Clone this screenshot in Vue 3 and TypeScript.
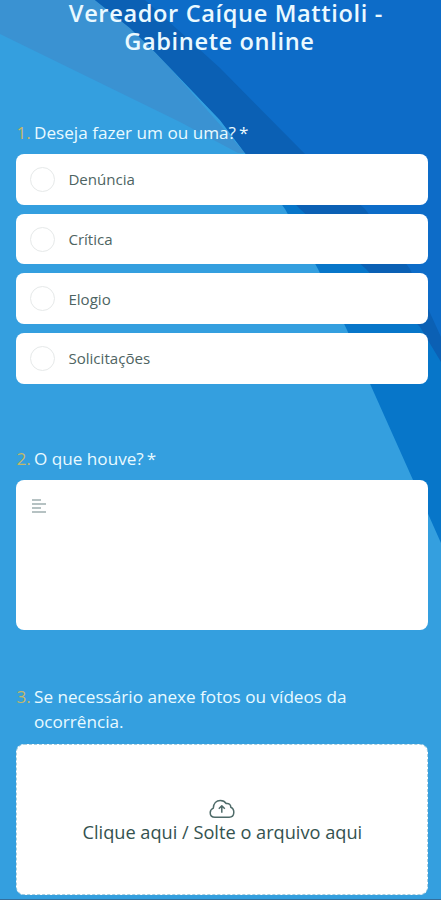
<script setup lang="ts">
interface Question {
  id: number
  text: string
  required: boolean
  kind: 'choice' | 'text' | 'upload'
}

const questions: Question[] = [
  { id: 1, text: 'Deseja fazer um ou uma?', required: true, kind: 'choice' },
  { id: 2, text: 'O que houve?', required: true, kind: 'text' },
  { id: 3, text: 'Se necessário anexe fotos ou vídeos da ocorrência.', required: false, kind: 'upload' },
]
const options: string[] = ['Denúncia', 'Crítica', 'Elogio', 'Solicitações']
</script>

<template>
  <main class="page">
    <svg class="backdrop" viewBox="0 0 441 900" aria-hidden="true">
      <rect width="441" height="900" fill="#349fdf" />
      <path d="M0 0H110L245 153H238L180 122L0 34Z" fill="#3a92d2" />
      <path d="M95 0H441V543L413 480L371 386L347 330L318 269L285 209L245 153L220 120L155 52L130 28Z" fill="#0776c9" />
      <path d="M95 0H441V362L420 327L366 269L300 209L245 153L220 120L155 52L130 28Z" fill="#0b60b4" />
      <path d="M145 0H441V337L410 269L365 209L304 153L220 68Z" fill="#0d6cc8" />
    </svg>
    <form class="form" @submit.prevent>
      <h1 class="title">
        <span class="line first">Vereador Caíque Mattioli -</span>
        <span class="line second">Gabinete online</span>
      </h1>
      <section v-for="q in questions" :key="q.id" class="question" :class="q.kind">
        <h2 class="label">
          <span class="number">{{ q.id }}.</span>
          <span class="prompt">{{ q.text }}<span v-if="q.required" class="star">*</span></span>
        </h2>
        <div v-if="q.kind === 'choice'" class="options">
          <div v-for="option in options" :key="option" class="option" role="radio" aria-checked="false">
            <span class="ring"></span>
            <span class="name">{{ option }}</span>
          </div>
        </div>
        <div v-else-if="q.kind === 'text'" class="answer">
          <svg class="lines" viewBox="0 0 14 14">
            <path d="M0 1H9M0 5H14M0 9H9M0 13H14" fill="none" stroke="#9eafb0" stroke-width="1.5" />
          </svg>
        </div>
        <div v-else class="drop">
          <svg class="cloud" viewBox="0 0 26 20">
            <path d="M6 18.2C3 18.2 1.2 16.4 1.2 13.7C1.2 11.5 2.4 10 4.3 9.1C4.5 4.3 7.4 1.4 11.3 1.4C14.1 1.4 16 2.5 17.2 4.5C20 4 21.8 5.7 21.8 8.3C23.9 9.3 25 11.2 24.8 13.7C24.6 16.4 22.8 18.2 20.2 18.2Z" />
            <path d="M12.8 13.8V7M9.8 9.8L12.8 6.8L15.8 9.8" />
          </svg>
          <span class="hint">Clique aqui / Solte o arquivo aqui</span>
        </div>
      </section>
    </form>
    <div class="edge"></div>
  </main>
</template>

<style>
body {
  margin: 0;
  overflow: hidden;
}
</style>

<style scoped>
.page {
  position: relative;
  box-sizing: border-box;
  width: 441px;
  height: 900px;
  overflow: hidden;
  display: flex;
  flex-direction: column;
  justify-content: space-between;
  font-family: "Open Sans", "Noto Sans", sans-serif;
}
.backdrop {
  position: absolute;
  inset: 0;
  width: 441px;
  height: 900px;
}
.form {
  position: relative;
  padding: 0 12.7px 0 16.4px;
}
.title {
  margin: -1.5px 0 65.5px;
  text-align: center;
  font-size: 23.6px;
  line-height: 28px;
  font-weight: 600;
  letter-spacing: 0.63px;
  color: #eaf9ff;
  white-space: nowrap;
}
.line {
  display: block;
}
.first {
  padding-left: 7px;
}
.second {
  padding-right: 6px;
}
.label {
  display: flex;
  margin: 0;
  font-size: 17.15px;
  line-height: 25px;
  font-weight: 400;
  color: #e9faff;
}
.number {
  flex: 0 0 17.6px;
  color: #c4b868;
}
.prompt {
  max-width: 340px;
}
.star {
  margin-left: 3px;
}
.options {
  display: flex;
  flex-direction: column;
  gap: 9px;
  margin-top: 9px;
}
.option {
  box-sizing: border-box;
  height: 50.7px;
  display: flex;
  align-items: center;
  gap: 13.4px;
  padding-left: 13.6px;
  border-radius: 8px;
  background: #fff;
}
.ring {
  box-sizing: border-box;
  width: 25px;
  height: 25px;
  border: 1px solid #e6e9e9;
  border-radius: 50%;
}
.name {
  font-size: 15.1px;
  line-height: 20px;
  color: #4e6462;
}
.text {
  margin-top: 62.5px;
}
.answer {
  box-sizing: border-box;
  height: 150px;
  margin-top: 9.2px;
  padding: 19px 16px;
  border-radius: 8px;
  background: #fff;
}
.lines {
  display: block;
  width: 14px;
  height: 14px;
}
.upload {
  margin-top: 53.7px;
}
.drop {
  box-sizing: border-box;
  height: 151px;
  margin-top: 9.5px;
  display: flex;
  flex-direction: column;
  align-items: center;
  padding-top: 54.6px;
  border: 1px dashed #a9cfdf;
  border-radius: 8px;
  background: #fff;
}
.cloud {
  width: 26px;
  height: 20px;
  fill: none;
  stroke: #4f6b69;
  stroke-width: 1.5;
  stroke-linejoin: round;
}
.hint {
  margin-top: 0.4px;
  font-size: 18.2px;
  line-height: 25px;
  color: #34524f;
  white-space: nowrap;
}
.edge {
  position: relative;
  height: 1px;
  background: #356f9c;
}
</style>
